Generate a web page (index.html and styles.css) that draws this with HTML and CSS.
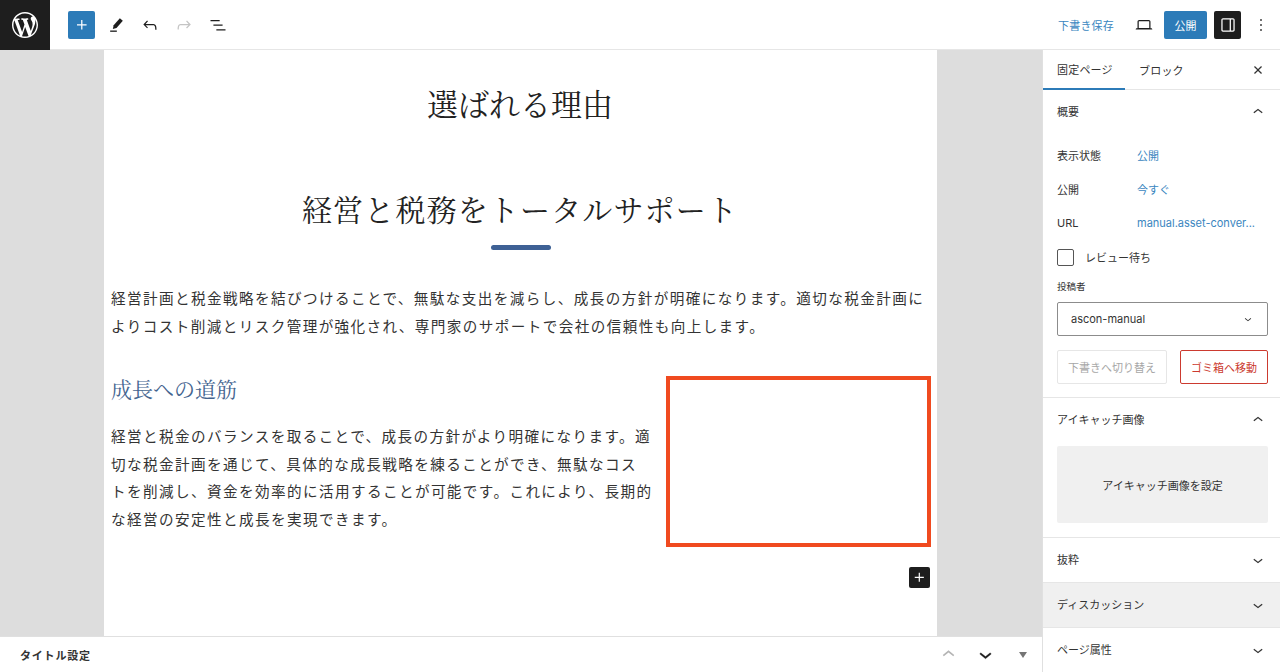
FILE: index.html
```html
<!DOCTYPE html>
<html lang="ja">
<head>
<meta charset="UTF-8">
<meta name="viewport" content="width=device-width, initial-scale=1.0">
<title>固定ページを編集</title>
<link rel="stylesheet" href="styles.css">
</head>
<body>

<svg class="defs" width="0" height="0">
  <symbol id="i-plus" viewBox="0 0 24 24"><path d="M11 12.5V17.5H12.5V12.5H17.5V11H12.5V6H11V11H6V12.5H11Z"/></symbol>
  <symbol id="i-undo" viewBox="0 0 24 24"><path d="M18.3 11.7c-.6-.6-1.4-.9-2.3-.9H6.7l2.9-3.3-1.1-1-4.5 5L8.5 16l1-1-2.7-2.7H16c.5 0 .9.2 1.3.5 1 1 1 3.4 1 4.5v.3h1.5v-.2c0-1.5 0-4.3-1.5-5.7z"/></symbol>
  <symbol id="i-redo" viewBox="0 0 24 24"><path d="M15.6 6.5l-1.1 1 2.9 3.3H8c-.9 0-1.7.3-2.3.9-1.4 1.5-1.4 4.2-1.4 5.6v.2h1.5v-.3c0-1.1 0-3.5 1-4.5.3-.3.7-.5 1.3-.5h9.2L14.5 15l1.1 1.1 4.6-4.6-4.6-5z"/></symbol>
  <symbol id="i-up" viewBox="0 0 24 24"><path d="M6.5 12.4L12 8l5.5 4.4-.9 1.2L12 10l-4.5 3.6-1-1.2z"/></symbol>
  <symbol id="i-down" viewBox="0 0 24 24"><path d="M17.5 11.6L12 16l-5.5-4.4.9-1.2L12 14l4.5-3.6 1 1.2z"/></symbol>
</svg>

<!-- top toolbar -->
<header class="topbar">
  <div class="wp-logo">
    <svg width="26" height="26" viewBox="0 0 20 20"><path d="M20 10c0-5.51-4.49-10-10-10C4.48 0 0 4.49 0 10c0 5.52 4.48 10 10 10 5.51 0 10-4.48 10-10zM7.78 15.37L4.37 6.22c.55-.02 1.17-.08 1.17-.08.5-.06.44-1.13-.06-1.11 0 0-1.45.11-2.37.11-.18 0-.37 0-.58-.01C4.12 2.69 6.87 1.11 10 1.11c2.33 0 4.45.87 6.05 2.34-.68-.11-1.65.39-1.65 1.58 0 .74.45 1.36.9 2.1.35.61.55 1.36.55 2.46 0 1.49-1.4 5-1.4 5l-3.03-8.37c.54-.02.82-.17.82-.17.5-.05.44-1.25-.06-1.22 0 0-1.44.12-2.38.12-.87 0-2.33-.12-2.33-.12-.5-.03-.56 1.2-.06 1.22l.92.08 1.26 3.41zM17.41 10c.24-.64.74-1.87.43-4.25.7 1.29 1.05 2.71 1.05 4.25 0 3.29-1.73 6.24-4.4 7.78.97-2.59 1.94-5.2 2.92-7.78zM6.1 18.09C3.12 16.65 1.11 13.53 1.11 10c0-1.3.23-2.48.72-3.59C3.25 10.3 4.67 14.2 6.1 18.09zm4.03-6.63l2.58 6.98c-.86.29-1.76.45-2.71.45-.79 0-1.57-.11-2.29-.33.81-2.38 1.62-4.74 2.42-7.1z"/></svg>
  </div>
  <div class="tools">
    <button class="icon-btn primary"><svg class="ic"><use href="#i-plus"/></svg></button>
    <button class="icon-btn"><svg class="ic" viewBox="0 0 24 24"><path d="M16.6 3.8l3.6 3-7.6 8.7-4.4 1.3 1-4.5z"/><path d="M5 18.6h8v1.6H5z"/></svg></button>
    <button class="icon-btn"><svg class="ic"><use href="#i-undo"/></svg></button>
    <button class="icon-btn muted"><svg class="ic"><use href="#i-redo"/></svg></button>
    <button class="icon-btn"><svg class="ic" viewBox="0 0 24 24"><path d="M3 6h11v1.5H3V6Zm3.5 5.5h11V13h-11v-1.5ZM21 17H10v1.5h11V17Z"/></svg></button>
  </div>
  <div class="actions">
    <a class="save-link">下書き保存</a>
    <button class="icon-btn preview"><svg class="ic" viewBox="0 0 24 24"><path d="M20.5 16h-.7V8c0-1.1-.9-2-2-2H6.2c-1.1 0-2 .9-2 2v8h-.7c-.8 0-1.5.7-1.5 1.5h20c0-.8-.7-1.5-1.5-1.5zM5.7 8c0-.3.2-.5.5-.5h11.6c.3 0 .5.2.5.5v7.6H5.7V8z"/></svg></button>
    <button class="publish">公開</button>
    <button class="icon-btn dark"><svg class="ic" viewBox="0 0 24 24"><path d="M18 4H6c-1.1 0-2 .9-2 2v12c0 1.1.9 2 2 2h12c1.1 0 2-.9 2-2V6c0-1.1-.9-2-2-2zm-4 14.5H6c-.3 0-.5-.2-.5-.5V6c0-.3.2-.5.5-.5h8v13zm4.5-.5c0 .3-.2.5-.5.5h-2.5v-13H18c.3 0 .5.2.5.5v12z"/></svg></button>
    <button class="icon-btn more"><svg class="ic" viewBox="0 0 24 24"><path d="M13 19h-2v-2h2v2zm0-6h-2v-2h2v2zm0-6h-2V5h2v2z"/></svg></button>
  </div>
</header>

<div class="workspace">
  <div class="editor">
    <main class="canvas">
      <article class="page">
        <h1 class="page-title">選ばれる理由</h1>
        <h2 class="lead-title">経営と税務をトータルサポート</h2>
        <div class="title-bar"></div>
        <p class="text intro">経営計画と税金戦略を結びつけることで、無駄な支出を減らし、成長の方針が明確になります。適切な税金計画によりコスト削減とリスク管理が強化され、専門家のサポートで会社の信頼性も向上します。</p>
        <div class="columns">
          <div class="col-text">
            <h3 class="sub-title">成長への道筋</h3>
            <p class="text">経営と税金のバランスを取ることで、成長の方針がより明確になります。適切な税金計画を通じて、具体的な成長戦略を練ることができ、無駄なコス<br>トを削減し、資金を効率的に活用することが可能です。これにより、長期的な経営の安定性と成長を実現できます。</p>
          </div>
          <div class="image-box"></div>
        </div>
        <div class="appender">
          <button class="add-block"><svg class="ic"><use href="#i-plus"/></svg></button>
        </div>
      </article>
    </main>
    <footer class="meta-bar">
      <span class="meta-title">タイトル設定</span>
      <div class="meta-icons">
        <svg class="ic muted-ic"><use href="#i-up"/></svg>
        <svg class="ic strong-ic"><use href="#i-down"/></svg>
        <svg class="caret" width="8" height="6" viewBox="0 0 8 6"><path d="M0 0h8L4 6z"/></svg>
      </div>
    </footer>
  </div>

  <aside class="sidebar">
    <div class="tabs">
      <span class="tab active">固定ページ</span>
      <span class="tab">ブロック</span>
      <svg class="ic tab-close" viewBox="0 0 24 24"><path d="M12 13.06l3.712 3.713 1.061-1.06L13.061 12l3.712-3.712-1.06-1.06L12 10.938 8.288 7.227l-1.061 1.06L10.939 12l-3.712 3.712 1.06 1.061L12 13.061z"/></svg>
    </div>

    <section class="panel summary">
      <div class="panel-head"><span>概要</span><svg class="ic"><use href="#i-up"/></svg></div>
      <div class="rows">
        <div class="row"><span class="row-label">表示状態</span><a class="row-link">公開</a></div>
        <div class="row"><span class="row-label">公開</span><a class="row-link">今すぐ</a></div>
        <div class="row"><span class="row-label">URL</span><a class="row-link">manual.asset-conver...</a></div>
      </div>
      <label class="check"><span class="check-box"></span>レビュー待ち</label>
      <div class="author-label">投稿者</div>
      <div class="select"><span>ascon-manual</span><svg class="select-ic" viewBox="0 0 24 24" width="14" height="14"><use href="#i-down"/></svg></div>
      <div class="btn-row">
        <button class="btn draft">下書きへ切り替え</button>
        <button class="btn trash">ゴミ箱へ移動</button>
      </div>
    </section>

    <section class="panel featured">
      <div class="panel-head"><span>アイキャッチ画像</span><svg class="ic"><use href="#i-up"/></svg></div>
      <button class="featured-btn">アイキャッチ画像を設定</button>
    </section>

    <section class="panel closed"><div class="panel-head"><span>抜粋</span><svg class="ic"><use href="#i-down"/></svg></div></section>
    <section class="panel closed hover"><div class="panel-head"><span>ディスカッション</span><svg class="ic"><use href="#i-down"/></svg></div></section>
    <section class="panel closed"><div class="panel-head"><span>ページ属性</span><svg class="ic"><use href="#i-down"/></svg></div></section>
  </aside>
</div>

</body>
</html>
```

FILE: styles.css
```css
* {
  box-sizing: border-box;
}

html, body {
  height: 100%;
}

body {
  margin: 0;
  display: flex;
  flex-direction: column;
  overflow: hidden;
  background-color: #fff;
  color: #1e1e1e;
  font-family: "Inter", "Noto Sans CJK JP", sans-serif;
  font-size: 11px;
}

button {
  border: 0;
  padding: 0;
  background: none;
  font: inherit;
  color: inherit;
}

svg {
  fill: currentColor;
  display: block;
}

.defs {
  position: absolute;
}

.ic {
  width: 20px;
  height: 20px;
}

/* top toolbar */
.topbar {
  height: 50px;
  flex: none;
  display: flex;
  align-items: center;
  border-bottom: 1px solid #e6e6e6;
}

.wp-logo {
  width: 50px;
  height: 50px;
  margin-bottom: -1px;
  display: flex;
  align-items: center;
  justify-content: center;
  background-color: #1e1e1e;
  color: #fff;
}

.tools {
  display: flex;
  gap: 7px;
  margin-left: 18px;
}

.icon-btn {
  width: 27px;
  height: 28px;
  display: flex;
  align-items: center;
  justify-content: center;
  border-radius: 2px;
}

.icon-btn.primary {
  background-color: #2c7bb8;
  color: #fff;
}

.icon-btn.muted {
  color: #c4c4c4;
}

.icon-btn.dark {
  margin-left: 7px;
  background-color: #1e1e1e;
  color: #fff;
}

.actions {
  margin-left: auto;
  display: flex;
  align-items: center;
}

.save-link {
  color: #3a86c0;
  letter-spacing: .2px;
}

.icon-btn.preview {
  margin-left: 16px;
}

.publish {
  width: 43px;
  height: 28px;
  margin-left: 7px;
  border-radius: 2px;
  background-color: #2c7bb8;
  color: #fff;
}

.icon-btn.more {
  margin-left: 6px;
  margin-right: 6px;
}

/* main area */
.workspace {
  flex: 1;
  min-height: 0;
  display: flex;
}

.editor {
  flex: 1;
  min-width: 0;
  display: flex;
  flex-direction: column;
}

.canvas {
  flex: 1;
  min-height: 0;
  padding-left: 104px;
  background-color: #dddddd;
}

.page {
  width: 833px;
  height: 100%;
  padding: 31px 6px 0 7px;
  background-color: #fff;
  color: #333;
  font-family: "Noto Sans CJK JP", sans-serif;
}

.page-title,
.lead-title,
.sub-title {
  margin: 0;
  font-family: "Noto Serif CJK JP", "Noto Sans CJK JP", serif;
  font-weight: 400;
  color: #222;
}

.page-title {
  padding-right: 2px;
  font-size: 31px;
  line-height: 44px;
  text-align: center;
}

.lead-title {
  margin-top: 61px;
  padding-right: 2px;
  font-size: 30px;
  line-height: 44px;
  letter-spacing: 1.15px;
  text-align: center;
}

.title-bar {
  width: 60px;
  height: 5px;
  margin: 15px 0 0 380px;
  border-radius: 3px;
  background-color: #3e6195;
}

.text {
  margin: 0;
  font-size: 14.6px;
  line-height: 27.5px;
  letter-spacing: 1.4px;
}

.intro {
  margin-top: 34px;
}

.columns {
  display: flex;
  gap: 10px;
  margin-top: 36px;
}

.col-text {
  width: 545px;
}

.sub-title {
  font-size: 21px;
  line-height: 26px;
  color: #44648f;
}

.col-text .text {
  margin-top: 21px;
}

.image-box {
  width: 265px;
  height: 171px;
  margin-top: 1px;
  border: 4px solid #f04a1f;
}

.appender {
  display: flex;
  justify-content: flex-end;
  margin-top: 20px;
  padding-right: 1px;
}

.add-block {
  width: 21px;
  height: 21px;
  display: flex;
  align-items: center;
  justify-content: center;
  border-radius: 2px;
  background-color: #1e1e1e;
  color: #fff;
}

.add-block .ic {
  width: 19px;
  height: 19px;
}

.meta-bar {
  height: 36px;
  flex: none;
  display: flex;
  align-items: center;
  padding-left: 20px;
  border-top: 1px solid #e0e0e0;
  background-color: #fff;
}

.meta-title {
  font-weight: 600;
  letter-spacing: .8px;
  color: #333;
}

.meta-icons {
  margin-left: auto;
  display: flex;
  align-items: center;
  gap: 12px;
  margin-right: 15px;
}

.meta-icons .ic {
  width: 25px;
  height: 25px;
}

.muted-ic {
  color: #b5b5b5;
}

.strong-ic {
  stroke: currentColor;
  stroke-width: .3px;
}

.caret {
  margin-left: 9px;
  color: #757575;
}

/* settings sidebar */
.sidebar {
  width: 238px;
  flex: none;
  border-left: 1px solid #e0e0e0;
  background-color: #fff;
  color: #333;
}

.tabs {
  height: 40px;
  display: flex;
  align-items: center;
  border-bottom: 1px solid #e6e6e6;
}

.tab {
  height: 40px;
  padding: 0 14px;
  display: flex;
  align-items: center;
  letter-spacing: .2px;
}

.tab.active {
  width: 82px;
  border-bottom: 2px solid #2c7bb8;
  white-space: nowrap;
}

.tab-close {
  margin-left: auto;
  margin-right: 12px;
}

.panel {
  border-bottom: 1px solid #e6e6e6;
}

.panel-head {
  height: 44px;
  padding: 0 12px 0 14px;
  display: flex;
  align-items: center;
  justify-content: space-between;
}

.panel-head span {
  margin-bottom: 2px;
}

.summary {
  height: 308px;
}

.rows {
  padding: 4px 0 0 14px;
}

.row {
  height: 34px;
  display: flex;
  align-items: center;
}

.row-label {
  width: 80px;
}

.row-link {
  color: #3a86c0;
}

.check {
  margin: 0 0 0 14px;
  height: 34px;
  display: flex;
  align-items: center;
  gap: 11px;
}

.check-box {
  width: 17px;
  height: 17px;
  border: 1px solid #555;
  border-radius: 2px;
}

.author-label {
  margin: 6px 0 0 14px;
  font-size: 9.5px;
  line-height: 14px;
}

.select {
  height: 34px;
  margin: 8px 12px 0 14px;
  padding: 0 13px;
  display: flex;
  align-items: center;
  justify-content: space-between;
  border: 1px solid #8c8c8c;
  border-radius: 2px;
}

.select-ic {
  margin-right: -1px;
}

.btn-row {
  display: flex;
  justify-content: space-between;
  margin: 14px 12px 0 14px;
}

.btn {
  height: 34px;
  border-radius: 2px;
}

.btn.draft {
  width: 110px;
  border: 1px solid #e6e6e6;
  color: #a7a7a7;
}

.btn.trash {
  width: 88px;
  border: 1px solid #cc3a2f;
  color: #cc3a2f;
}

.featured {
  height: 140px;
}

.featured-btn {
  width: 211px;
  height: 77px;
  margin: 4px 0 0 14px;
  display: block;
  border-radius: 2px;
  background-color: #f0f0f0;
}

.closed {
  height: 45px;
}

.hover {
  background-color: #f0f0f0;
}
```
